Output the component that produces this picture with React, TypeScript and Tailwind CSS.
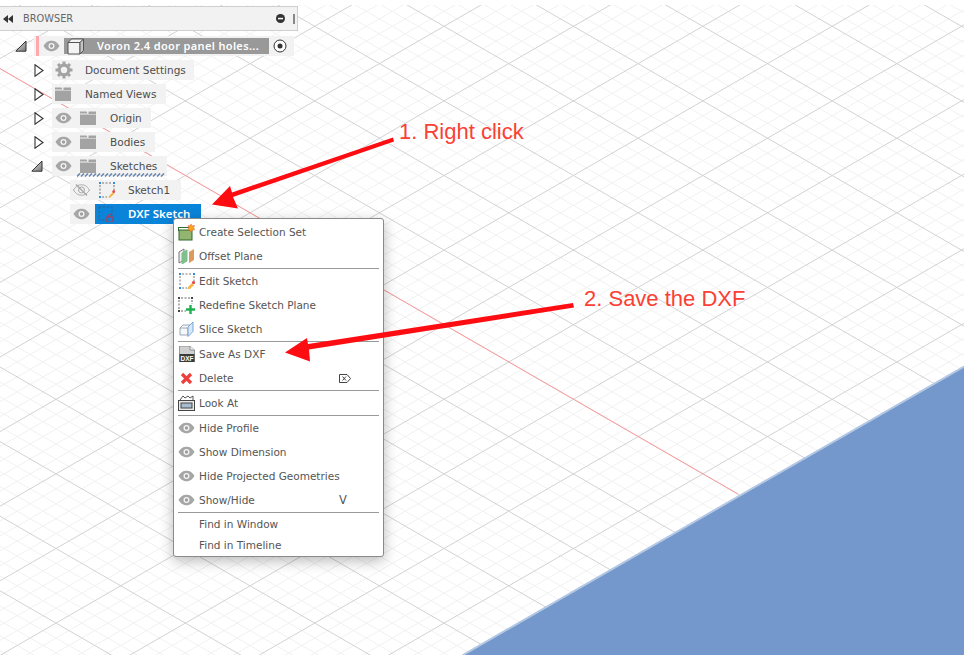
import type { ReactNode } from 'react'

const S = 0.5767
const W = 964
const H = 655
const STEP = 74.6

// grid lines are y = c + S*x and y = d - S*x, major every 5th
function gridLines() {
  const minor: string[] = []
  const major: string[] = []
  for (let k = -60; k < 120; k++) {
    const offset = (k * STEP) / 5
    const isMajor = k % 5 === 0
    const c = -6 + offset
    const d = 730 + offset
    const down = `M0 ${c}L${W} ${c + S * W}`
    const up = `M0 ${d}L${W} ${d - S * W}`
    if (isMajor) major.push(down, up)
    else minor.push(down, up)
  }
  return { minor: minor.join(''), major: major.join('') }
}

function Eye({ off }: { off?: boolean }) {
  return (
    <svg width="17" height="12" viewBox="0 0 17 12" className="shrink-0">
      <path d="M0.5 6C3 2 5.5 0.8 8.5 0.8S14 2 16.5 6C14 10 11.5 11.2 8.5 11.2S3 10 0.5 6Z" fill={off ? 'none' : '#a6a6a6'} stroke={off ? '#a6a6a6' : 'none'} />
      <circle cx="8.5" cy="6" r="3" fill={off ? 'none' : '#f4f4f4'} stroke={off ? '#a6a6a6' : 'none'} />
      {off ? <path d="M3 0.5L14 11.5" stroke="#a6a6a6" strokeWidth="1.2" /> : <circle cx="8.5" cy="6" r="1.7" fill="#a0a0a0" />}
    </svg>
  )
}

function Folder() {
  return (
    <svg width="16" height="14" viewBox="0 0 16 14" className="shrink-0">
      <path d="M0 0.5H6.5L7.5 2.5H0ZM8.5 0.5H16V3H8.5ZM0 3.5H16V14H0Z" fill="#a3a3a3" />
    </svg>
  )
}

function Gear() {
  return (
    <svg width="18" height="18" viewBox="0 0 18 18" className="shrink-0">
      <circle cx="9" cy="9" r="4.8" fill="none" stroke="#a3a3a3" strokeWidth="3.2" />
      <path d="M9 0.5V4M9 14V17.5M0.5 9H4M14 9H17.5M3 3L5.5 5.5M12.5 12.5L15 15M15 3L12.5 5.5M5.5 12.5L3 15" stroke="#a3a3a3" strokeWidth="3" />
    </svg>
  )
}

function Open() {
  return (
    <svg width="12" height="12" viewBox="0 0 12 12" className="shrink-0">
      <defs>
        <linearGradient id="tri" x1="0" x2="1" y1="0" y2="1">
          <stop offset="0" stopColor="#e6e6e6" />
          <stop offset="1" stopColor="#777" />
        </linearGradient>
      </defs>
      <path d="M0.8 11.2L11 1V11.2Z" fill="url(#tri)" stroke="#333" strokeWidth="1" />
    </svg>
  )
}

function Closed() {
  return (
    <svg width="10" height="13" viewBox="0 0 10 13" className="shrink-0">
      <path d="M1 0.8L9 6.5L1 12.2Z" fill="#fff" stroke="#333" strokeWidth="1.1" />
    </svg>
  )
}

function SketchFrame({ tail }: { tail: ReactNode }) {
  return (
    <svg width="16" height="16" viewBox="0 0 16 16" className="shrink-0">
      <path d="M3 1H13M1 3V13M3 15H8M15 3V8" stroke="#777" strokeWidth="1" strokeDasharray="2 1.5" fill="none" />
      <path d="M0 0H2V2H0ZM14 0H16V2H14ZM0 14H2V16H0Z" fill="#2b8fe8" />
      {tail}
    </svg>
  )
}

function TreeRow({ pad, toggle, pill, icon, label }: { pad: string; toggle: ReactNode; pill: string; icon: ReactNode; label: string }) {
  return (
    <div className="flex h-6 items-center">
      <div className={`flex justify-center ${pad}`}>{toggle}</div>
      <div className={`flex h-5 items-center bg-[#f2f2f2] ${pill}`}>
        {icon}
        <span className="whitespace-nowrap pt-[2px]">{label}</span>
      </div>
    </div>
  )
}

function Sep() {
  return <div className="mx-[4px] h-px bg-[#999]" />
}

function Item({ icon, label, shortcut, h = 'h-6' }: { icon?: ReactNode; label: string; shortcut?: ReactNode; h?: string }) {
  return (
    <div className={`flex items-center ${h}`}>
      <div className="flex w-[25px] justify-center">{icon}</div>
      <span className="pt-[2px]">{label}</span>
      {shortcut && <div className="ml-auto mr-[24px] flex w-[20px] justify-start pl-[0px]">{shortcut}</div>}
    </div>
  )
}

export default function App() {
  const { minor, major } = gridLines()
  const text = { fontFamily: '"DejaVu Sans", sans-serif' }
  const semibold = { fontFamily: '"Noto Sans", sans-serif' }
  const annotation = { fontFamily: '"Liberation Sans", sans-serif' }
  return (
    <div className="relative h-[655px] w-[964px] overflow-hidden bg-white" style={text}>
      <svg width={W} height={H} className="absolute inset-0">
        <defs>
          <clipPath id="floor">
            <path d="M0 5H964V367L464 655H0Z" />
          </clipPath>
        </defs>
        <g clipPath="url(#floor)" fill="none">
          <path d={minor} stroke="#f1f1f1" strokeWidth="1" />
          <path d={major} stroke="#d2d2d2" strokeWidth="1" />
          <path d="M0 68.6L738 494" stroke="#ff9c9c" strokeWidth="1" />
        </g>
        <path d="M964 366L462 655H964Z" fill="#7498cc" />
        <path d="M964 366.5L463 655" stroke="#b4c8e4" strokeWidth="2" fill="none" />
      </svg>

      <div className="absolute left-0 top-[6px] w-[298px] text-[10.5px] text-[#4d4d4d]">
        <div className="flex h-[25px] items-center border border-l-0 border-[#cfcfcf] bg-[#f2f2f2] pl-[3px] pr-[1px]">
          <svg width="10" height="8" viewBox="0 0 10 8">
            <path d="M5 0V8L0 4ZM10 0V8L5 4Z" fill="#333" />
          </svg>
          <span className="ml-[10px] pt-[2px] text-[9.8px] text-[#666]">BROWSER</span>
          <svg width="9" height="9" viewBox="0 0 9 9" className="ml-auto mr-[8px]">
            <circle cx="4.5" cy="4.5" r="4.5" fill="#333" />
            <rect x="2" y="3.8" width="5" height="1.5" fill="#fff" />
          </svg>
          <div className="mr-[1px] h-[10px] w-[2px] border-x border-[#888]" />
        </div>
        <div className="mt-[3px]">
          <div className="flex h-6 items-center">
            <div className="flex w-[34px] justify-center pl-[7px]"><Open /></div>
            <div className="flex h-5 w-[260px] items-center bg-[#f2f2f2] pl-[2px]">
              <div className="h-5 w-[3px] bg-[#ffa9ae]" />
              <div className="ml-[4px]"><Eye /></div>
              <div className="ml-[4px] flex h-[16px] w-[205px] shrink-0 items-center bg-[#999] text-[11px] font-semibold tracking-[0.35px] text-white" style={semibold}>
                <svg width="18" height="17" viewBox="0 0 18 17" className="ml-[3px] shrink-0">
                  <path d="M1 4.5L4.5 1H16.5V12.5L13 16H1Z" fill="#f4f4f4" stroke="#555" />
                  <path d="M1 4.5H13V16M13 4.5L16.5 1" fill="none" stroke="#555" />
                  <path d="M13 4.5L16.5 1V12.5L13 16Z" fill="#c4c4c4" stroke="#555" />
                </svg>
                <span className="ml-[12px] whitespace-nowrap">Voron 2.4 door panel holes...</span>
              </div>
              <svg width="14" height="14" viewBox="0 0 14 14" className="ml-[4px] shrink-0">
                <circle cx="7" cy="7" r="6" fill="#fff" stroke="#333" />
                <circle cx="7" cy="7" r="2.5" fill="#333" />
              </svg>
            </div>
          </div>
          <TreeRow pad="w-[52px] pl-[26px]" toggle={<Closed />} pill="w-[142px]" icon={<div className="ml-[3px] mr-[12px]"><Gear /></div>} label="Document Settings" />
          <TreeRow pad="w-[52px] pl-[26px]" toggle={<Closed />} pill="w-[114px]" icon={<div className="ml-[3px] mr-[14px]"><Folder /></div>} label="Named Views" />
          <TreeRow pad="w-[52px] pl-[26px]" toggle={<Closed />} pill="w-[99px]" icon={<div className="ml-[3px] mr-[14px] flex items-center gap-[8px]"><Eye /><Folder /></div>} label="Origin" />
          <TreeRow pad="w-[52px] pl-[26px]" toggle={<Closed />} pill="w-[103px]" icon={<div className="ml-[3px] mr-[14px] flex items-center gap-[8px]"><Eye /><Folder /></div>} label="Bodies" />
          <div className="relative">
            <TreeRow pad="w-[52px] pl-[22px]" toggle={<Open />} pill="w-[115px]" icon={<div className="ml-[3px] mr-[14px] flex items-center gap-[8px]"><Eye /><Folder /></div>} label="Sketches" />
            <svg width="90" height="4" viewBox="0 0 90 4" className="absolute left-[77px] top-[19px]">
              <path d="M0 3.5L3 0.5M4 3.5L7 0.5M8 3.5L11 0.5M12 3.5L15 0.5M16 3.5L19 0.5M20 3.5L23 0.5M24 3.5L27 0.5M28 3.5L31 0.5M32 3.5L35 0.5M36 3.5L39 0.5M40 3.5L43 0.5M44 3.5L47 0.5M48 3.5L51 0.5M52 3.5L55 0.5M56 3.5L59 0.5M60 3.5L63 0.5M64 3.5L67 0.5M68 3.5L71 0.5M72 3.5L75 0.5M76 3.5L79 0.5M80 3.5L83 0.5M84 3.5L87 0.5" fill="none" stroke="#6b87ad" strokeWidth="1.6" />
            </svg>
          </div>
          <div className="flex h-6 items-center pl-[70px]">
            <div className="flex h-5 w-[111px] items-center bg-[#f2f2f2]">
              <div className="ml-[3px]"><Eye off /></div>
              <div className="ml-[9px] mr-[13px]">
                <SketchFrame tail={<><path d="M10 14L14 10L15.5 11.5L11.5 15.5L9.5 16Z" fill="#f2b84b" /><circle cx="14.8" cy="9.5" r="1.5" fill="#e5484d" /></>} />
              </div>
              <span className="pt-[2px]">Sketch1</span>
            </div>
          </div>
          <div className="flex h-6 items-center pl-[70px]">
            <div className="flex h-5 w-[25px] items-center bg-[#f2f2f2] pl-[3px]"><Eye /></div>
            <div className="flex h-5 w-[106px] items-center bg-[#0a84d9] text-[11.5px] font-semibold text-white" style={semibold}>
              <div className="ml-[3px] mr-[14px]">
                <svg width="16" height="16" viewBox="0 0 16 16">
                  <path d="M1 1H14V12M1 1V14H8" fill="none" stroke="#34608c" strokeWidth="1" strokeDasharray="2.5 1.5" />
                  <path d="M9 11H15V16H9Z" fill="none" stroke="#b5364f" strokeWidth="1.2" />
                  <path d="M10.5 11V9.5A1.5 1.5 0 0 1 13.5 9.5V11" fill="none" stroke="#b5364f" />
                </svg>
              </div>
              <span>DXF Sketch</span>
            </div>
          </div>
        </div>
      </div>

      <div className="absolute left-[173px] top-[218px] w-[211px] rounded-[3px] border border-[#8a8a8a] bg-white py-px text-[10.5px] text-[#555] shadow-[0_4px_14px_rgba(0,0,0,0.28)]">
        <Item label="Create Selection Set" icon={
          <svg width="17" height="17" viewBox="0 0 17 17">
            <rect x="0.5" y="3.5" width="12" height="3" fill="#fff" stroke="#2e6b2e" />
            <rect x="1" y="6" width="13" height="10" fill="#93b56f" stroke="#2e6b2e" />
            <path d="M13 0L14 2L16.5 1.5L15.5 4L17 5.5L14.5 6L13 8L11.5 6L9.5 5.5L11 4L10 1.5L12 2Z" fill="#f5a51e" stroke="#e2572b" strokeWidth="0.5" />
          </svg>
        } />
        <Item label="Offset Plane" icon={
          <svg width="17" height="16" viewBox="0 0 17 16">
            <path d="M1 4L6 1V12L1 15Z" fill="#f0f0f0" stroke="#777" />
            <path d="M4 5L9 2V13L4 16Z" fill="#7fc08d" stroke="#7fc08d" />
            <path d="M11 4L16 1V12L11 15Z" fill="#dc9a5e" />
          </svg>
        } />
        <Sep />
        <Item label="Edit Sketch" icon={
          <SketchFrame tail={<><path d="M9 14L13 10L15 12L11 16L8.5 16Z" fill="#f2b84b" /><circle cx="14.5" cy="9.5" r="1.6" fill="#e5484d" /></>} />
        } />
        <Item label="Redefine Sketch Plane" icon={
          <svg width="17" height="17" viewBox="0 0 17 17">
            <path d="M3 1H13M1 3V12M3 14H8M14 3V7" stroke="#666" strokeWidth="1" strokeDasharray="2 1.5" fill="none" />
            <path d="M0 0H2V2H0ZM13 0H15V2H13ZM0 13H2V15H0Z" fill="#444" />
            <path d="M12.5 8V17M8 12.5H17" stroke="#1fb14f" strokeWidth="2.4" />
          </svg>
        } />
        <Item label="Slice Sketch" icon={
          <svg width="16" height="16" viewBox="0 0 16 16">
            <path d="M1 7H9V14H1ZM1 7L4 4H12" fill="#f6f7f9" stroke="#8592a3" strokeWidth="0.8" />
            <path d="M9 6L14 1V10.5L9 15.5Z" fill="#dbe8f7" stroke="#5a93d6" strokeWidth="0.8" />
          </svg>
        } />
        <Sep />
        <Item label="Save As DXF" icon={
          <div className="relative h-[16px] w-[16px]">
            <svg width="16" height="16" viewBox="0 0 16 16" className="absolute inset-0">
              <path d="M0.5 0H11L15.5 4V16H0.5Z" fill="#cfcfcf" stroke="#666" strokeWidth="0.6" />
              <path d="M11 0V4H15.5" fill="#efefef" stroke="#666" strokeWidth="0.6" />
              <rect x="0.5" y="8" width="15" height="8" fill="#3a3a3a" />
            </svg>
            <span className="absolute left-[2px] top-[8.5px] text-[6.5px] font-bold leading-[7px] text-white" style={annotation}>DXF</span>
          </div>
        } />
        <Item label="Delete" icon={
          <svg width="13" height="13" viewBox="0 0 13 13">
            <path d="M2 2L11 11M11 2L2 11" stroke="#ee3f3f" strokeWidth="3.2" />
          </svg>
        } shortcut={
          <svg width="12" height="9" viewBox="0 0 12 9">
            <path d="M0.5 0.5H8L11.5 4.5L8 8.5H0.5Z" fill="none" stroke="#444" />
            <path d="M3.5 2.5L7 6.5M7 2.5L3.5 6.5" stroke="#444" />
          </svg>
        } />
        <Sep />
        <Item label="Look At" icon={
          <svg width="17" height="16" viewBox="0 0 17 16">
            <path d="M2 5L5 1L7 3L10 1L12 3L15 1V5" fill="none" stroke="#555" />
            <rect x="0.5" y="5.5" width="16" height="10" fill="#e9e9e9" stroke="#444" />
            <rect x="3" y="8" width="11" height="5" fill="#a7bcd0" stroke="#444" />
          </svg>
        } />
        <Sep />
        <Item label="Hide Profile" icon={<Eye />} />
        <Item label="Show Dimension" icon={<Eye />} />
        <Item label="Hide Projected Geometries" icon={<Eye />} />
        <Item label="Show/Hide" icon={<Eye />} shortcut={<span className="pt-[2px] text-[11.5px]">V</span>} />
        <Sep />
        <Item label="Find in Window" h="h-[22px]" />
        <Item label="Find in Timeline" h="h-[20px]" />
      </div>

      <svg width={W} height={H} className="pointer-events-none absolute inset-0">
        <path d="M393 137.5L394 141.5L233 197L238 208.5L212 204.5L230 186L232 192.5Z" fill="#fd0d12" />
        <path d="M573 303L574 307.5L309 349.5L310 361.5L285 352.5L307 338L308 344Z" fill="#fd0d12" />
      </svg>
      <span className="absolute left-[399px] top-[119px] text-[22px] leading-[26px] text-[#fb3f35]" style={annotation}>1. Right click</span>
      <span className="absolute left-[584px] top-[286px] text-[22px] leading-[26px] text-[#fb3f35]" style={annotation}>2. Save the DXF</span>
    </div>
  )
}
